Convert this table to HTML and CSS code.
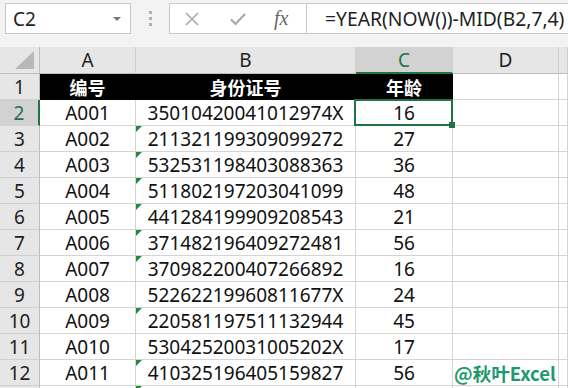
FILE: index.html
```html
<!DOCTYPE html>
<html lang="zh">
<head>
<meta charset="utf-8">
<link rel="stylesheet" href="styles.css">
</head>
<body>
<div class="toolbar">
  <div class="namebox"><span class="name">C2</span><span class="caret"></span></div>
  <div class="grip"><i></i><i></i><i></i></div>
  <div class="fxbox">
    <svg class="ico" width="14" height="14" viewBox="0 0 14 14"><path d="M1 1L13 13M13 1L1 13" stroke="#a8a8a8" stroke-width="1.6" fill="none"/></svg>
    <svg class="ico" width="16" height="14" viewBox="0 0 16 14"><path d="M1 7.5L5.5 12L15 2" stroke="#a8a8a8" stroke-width="2.2" fill="none"/></svg>
    <span class="fx">fx</span>
  </div>
  <div class="formula">=YEAR(NOW())-MID(B2,7,4)</div>
</div>
<div class="sheet">
  <div class="hd corner"><svg width="20" height="18" viewBox="0 0 20 18"><path d="M19 0V18H0Z" fill="#b8b8b8"/></svg></div>
  <div class="hd">A</div><div class="hd">B</div><div class="hd sel">C</div><div class="hd">D</div><div class="hd"></div>

  <div class="rh">1</div><div class="c title">编号</div><div class="c title">身份证号</div><div class="c title">年龄</div><div class="c"></div><div class="c"></div>

  <div class="rh sel">2</div><div class="c">A001</div><div class="c">35010420041012974X</div><div class="c active">16</div><div class="c"></div><div class="c"></div>
  <div class="rh">3</div><div class="c">A002</div><div class="c tri">211321199309099272</div><div class="c">27</div><div class="c"></div><div class="c"></div>
  <div class="rh">4</div><div class="c">A003</div><div class="c tri">532531198403088363</div><div class="c">36</div><div class="c"></div><div class="c"></div>
  <div class="rh">5</div><div class="c">A004</div><div class="c tri">511802197203041099</div><div class="c">48</div><div class="c"></div><div class="c"></div>
  <div class="rh">6</div><div class="c">A005</div><div class="c tri">441284199909208543</div><div class="c">21</div><div class="c"></div><div class="c"></div>
  <div class="rh">7</div><div class="c">A006</div><div class="c tri">371482196409272481</div><div class="c">56</div><div class="c"></div><div class="c"></div>
  <div class="rh">8</div><div class="c">A007</div><div class="c tri">370982200407266892</div><div class="c">16</div><div class="c"></div><div class="c"></div>
  <div class="rh">9</div><div class="c">A008</div><div class="c">52262219960811677X</div><div class="c">24</div><div class="c"></div><div class="c"></div>
  <div class="rh">10</div><div class="c">A009</div><div class="c tri">220581197511132944</div><div class="c">45</div><div class="c"></div><div class="c"></div>
  <div class="rh">11</div><div class="c">A010</div><div class="c">53042520031005202X</div><div class="c">17</div><div class="c"></div><div class="c"></div>
  <div class="rh">12</div><div class="c">A011</div><div class="c tri">410325196405159827</div><div class="c">56</div><div class="c mark">@秋叶Excel</div><div class="c"></div>
  <div class="rh"></div><div class="c"></div><div class="c tri"></div><div class="c"></div><div class="c"></div><div class="c"></div>
</div>
</body>
</html>
```
FILE: styles.css
```css
* { box-sizing: border-box; }
html, body { margin: 0; padding: 0; }
body {
  width: 568px;
  height: 388px;
  overflow: hidden;
  background: #f3f3f3;
  font-family: "Noto Sans", "Noto Sans CJK SC", sans-serif;
  color: #111;
}
.toolbar {
  height: 47px;
  display: flex;
  align-items: flex-start;
  padding: 3px 0 0 5px;
}
.namebox {
  width: 126px;
  height: 31px;
  background: #fff;
  border: 1px solid #c8c8c8;
  display: flex;
  align-items: center;
  justify-content: space-between;
  padding: 0 9px 0 7px;
}
.name { font-size: 19px; color: #222; }
.caret {
  width: 0; height: 0;
  border-left: 4px solid transparent;
  border-right: 4px solid transparent;
  border-top: 4px solid #777;
}
.grip {
  width: 38px;
  height: 31px;
  display: flex;
  flex-direction: column;
  align-items: center;
  justify-content: center;
  gap: 3px;
}
.grip i { display: block; width: 3px; height: 3px; background: #b0b0b0; }
.fxbox {
  width: 138px;
  height: 31px;
  background: #fff;
  border: 1px solid #c8c8c8;
  display: flex;
  align-items: center;
  padding-left: 15px;
  gap: 31px;
}
.fx {
  font-family: "Liberation Serif", serif;
  font-style: italic;
  font-size: 20px;
  color: #666;
  margin-left: -3px;
}
.formula {
  flex: 1;
  height: 31px;
  background: #fff;
  border: 1px solid #c8c8c8;
  border-left: none;
  border-right: none;
  font-size: 19.3px;
  line-height: 29px;
  padding-left: 18px;
  white-space: nowrap;
  color: #222;
}
.sheet {
  display: grid;
  grid-template-columns: 40px 96px 220px 97px 106px 1fr;
  grid-template-rows: 27px;
  grid-auto-rows: 26px;
  background: #fff;
}
.sheet > div {
  display: flex;
  align-items: center;
  justify-content: center;
  font-size: 19px;
  white-space: nowrap;
  overflow: hidden;
}
.hd {
  background: #e6e6e6;
  border-right: 1px solid #cfcfcf;
  border-bottom: 1px solid #bdbdbd;
  color: #222;
}
.hd.corner { justify-content: flex-end; align-items: flex-end; padding: 0 4px 4px 0; border-right-color: #bdbdbd; }
.hd.sel {
  background: #d2d2d2;
  color: #217346;
  border-bottom: 2px solid #217346;
}
.rh {
  background: #e6e6e6;
  border-right: 1px solid #bdbdbd;
  border-bottom: 1px solid #d0d0d0;
  color: #222;
}
.rh.sel {
  background: #d2d2d2;
  color: #217346;
  border-right: 2px solid #217346;
}
.c {
  border-right: 1px solid #d4d4d4;
  border-bottom: 1px solid #d4d4d4;
  color: #111;
  position: relative;
}
.c.title {
  background: #000;
  color: #fff;
  font-family: "Noto Sans CJK SC", sans-serif;
  font-weight: 700;
  font-size: 18px;
  border-color: #000;
}
.c.tri::before {
  content: "";
  position: absolute;
  left: 0;
  top: 0;
  border-top: 6px solid #1f8a3a;
  border-right: 6px solid transparent;
}
.sheet > .c.active {
  overflow: visible;
  z-index: 3;
}
.c.active::after {
  content: "";
  position: absolute;
  left: -2px;
  top: -1px;
  right: -1px;
  bottom: -1px;
  border: 2px solid #217346;
}
.c.active::before {
  content: "";
  position: absolute;
  right: -3px;
  bottom: -3px;
  width: 6px;
  height: 6px;
  background: #217346;
  z-index: 2;
}
.sheet > .c.mark {
  justify-content: flex-start;
  padding-left: 1px;
  font-family: "Noto Sans CJK SC", sans-serif;
  font-weight: 700;
  font-size: 18.5px;
  color: #1d9a6c;
  overflow: visible;
}
```
